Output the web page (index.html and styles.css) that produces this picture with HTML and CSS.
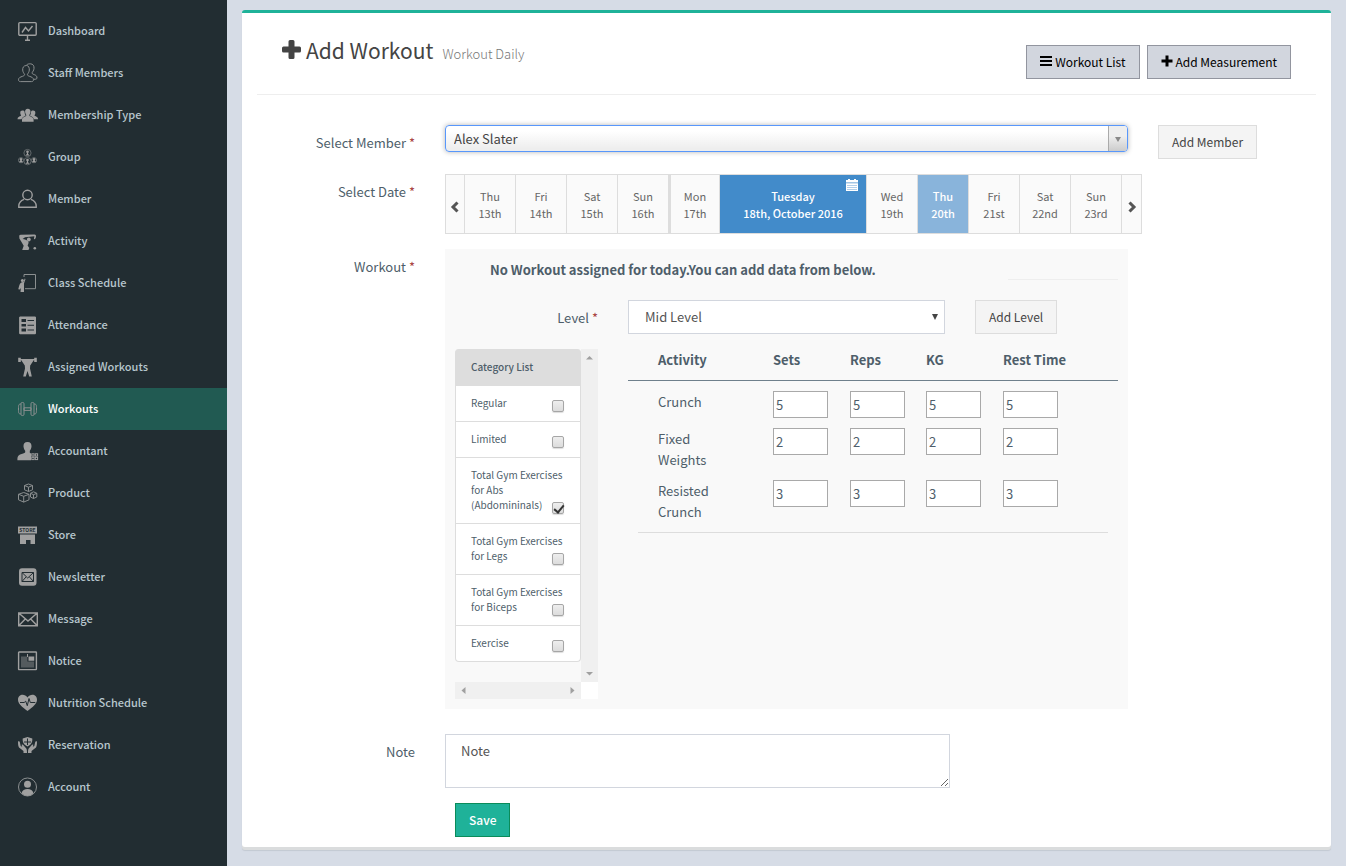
FILE: index.html
```html
<!DOCTYPE html>
<html lang="en">
<head>
<meta charset="utf-8">
<title>Add Workout</title>
<link rel="stylesheet" href="styles.css">
</head>
<body>
<div class="layout">
  <nav class="sidebar">
    <a class="nav-item" href="#"><svg class="nav-icon" viewBox="0 0 20 20"><rect x=".8" y="1.6" width="17.4" height="12.6" rx="1"/><path d="M4 11.5 7.5 6.500 10.500 10 14.500 5M9.500 14v4.500M7 19.300h5"/></svg>Dashboard</a>
    <a class="nav-item" href="#"><svg class="nav-icon thin" viewBox="0 0 20 20"><path d="M8.500 2.500c-3 0-4 2.200-3.800 4.600.2 2.200 1.300 3.300 1.800 4.100.5 1-.5 1.600-2.200 2.200C2.500 14 .5 14.600.5 16.800c0 1.200.8 1.800 2 1.800h11c1.200 0 2-.6 2-1.800 0-2.200-2-2.800-3.800-3.400-1.700-.6-2.700-1.200-2.200-2.200.5-.8 1.600-1.900 1.800-4.100.2-2.400-.8-4.600-2.800-4.600zM8.500 2C9.500 1 11 .8 12.200.8c3 0 4 2.200 3.800 4.600-.2 2.200-1.300 3.300-1.800 4.100-.5 1 .5 1.600 2.200 2.200 1.400.5 2.600 1.300 2.600 3.300 0 1-1.200 1.300-3 1.300"/></svg>Staff Members</a>
    <a class="nav-item" href="#"><svg class="nav-icon solid" viewBox="0 0 20 20"><path d="M9.800 3.800c2 0 2.900 1.400 2.700 3.300-.1 1.300-.7 2-1.100 2.700v1.200c1.400.8 4.200 1.400 4.200 3.600v2.200H4v-2.200c0-2.200 2.800-2.800 4.200-3.600V9.800c-.4-.7-1-1.400-1.100-2.700-.2-1.900.7-3.300 2.700-3.300zM4.500 5.500c1.100 0 1.900.5 2.100 1.400 0 1.400.5 2.500 1.100 3.600-1.500 1.200-3.700 1.600-4.200 3.700H-.5c0-2.200 2-2.700 3.500-3.400V10C2.300 9 2.200 8.200 2.300 7.400c0-1.200.8-1.900 2.200-1.900zM15.100 5.500c-1.100 0-1.900.5-2.100 1.400 0 1.400-.5 2.500-1.100 3.600 1.500 1.200 3.700 1.600 4.200 3.700h4c0-2.200-2-2.700-3.500-3.400V10c.7-1 .8-1.800.7-2.600 0-1.200-.8-1.900-2.200-1.900z"/></svg>Membership Type</a>
    <a class="nav-item" href="#"><svg class="nav-icon thin" viewBox="0 0 20 20"><g opacity=".6"><circle cx="9.500" cy="6" r="3.600"/><circle cx="3" cy="13.200" r="2.600"/><circle cx="9.500" cy="14.200" r="3.600"/><circle cx="16" cy="13.200" r="2.600"/></g><g class="fill"><circle cx="9.500" cy="4.800" r="1.300"/><path d="M8.900 6h1.200v1l1.500 1.400h-4.200L8.900 7z"/><circle cx="9.500" cy="13" r="1.300"/><path d="M8.900 14h1.200v1.300l1.500 1.400h-4.200l1.500-1.400z"/><circle cx="3" cy="12.300" r="1.200"/><path d="M2.500 13h1l1.500 2.200H1z"/><circle cx="16" cy="12.300" r="1.200"/><path d="M15.500 13h1l1.500 2.200h-4z"/></g></svg>Group</a>
    <a class="nav-item" href="#"><svg class="nav-icon" viewBox="0 0 20 20"><circle cx="9.500" cy="6" r="4.700"/><path d="M6 10.300C3 11.500.8 13.500.8 17v1.300h17.400V17c0-3.500-2.200-5.500-5.200-6.700"/></svg>Member</a>
    <a class="nav-item" href="#"><svg class="nav-icon solid" viewBox="0 0 20 20"><path d="M1.200 4.500 2.500 3.800l14-.2 1.300.5.200 1.800-1 2.300-1.100-.3.500-2.600L7 6.200 4.600 8c1.800.2 4.600.8 5.700 2.500.7 1.300-.2 2.800-.7 4l1.700 2.600-.8 1.900H4.200l1.500-4.300L3.500 11 1.400 7.500z"/><circle cx="10.800" cy="8.500" r="1.900"/><circle cx="16.800" cy="17.300" r="1.300"/></svg>Activity</a>
    <a class="nav-item" href="#"><svg class="nav-icon thin" viewBox="0 0 20 20"><path d="M6 4V1.500h11.500v14.200H7"/><g class="fill"><circle cx="4.400" cy="7.500" r="1.500"/><path d="M7.500 6 6 10.500V19H2.500l.3-4-1 1.500-1.500-.3C1 13.500 1.600 10 3.800 9.200l1.700-.1L6.700 5.600z"/></g></svg>Class Schedule</a>
    <a class="nav-item" href="#"><svg class="nav-icon solid" viewBox="0 0 20 20"><path fill-rule="evenodd" d="M2 1.500h15.200l.8.800v16.200l-.8.700H2l-.9-.7V2.300zM3.500 4v3H8V4zm0 5v2.500H8V9zm0 4.500v3H8v-3zM9.500 5v1H16V5zm0 4.700v1H16v-1zm0 4.700v1H16v-1z"/></svg>Attendance</a>
    <a class="nav-item" href="#"><svg class="nav-icon solid" viewBox="0 0 20 20"><path d="M.2.800h2.600V2h13.400V.8h2.600V5h-2.600V3.200h-.5l-3.500 5.300-.2 3 1.800 8h-2.600L9.500 14l-1.700 5.500H5.200l1.800-8-.2-3L3.300 3.200h-.5V5H.2z"/><circle cx="9.500" cy="5.700" r="1.900"/></svg>Assigned Workouts</a>
    <a class="nav-item active" href="#"><svg class="nav-icon thin" viewBox="0 0 20 20"><rect x="3" y="3.500" width="3" height="13" rx="1.200"/><rect x="13" y="3.500" width="3" height="13" rx="1.200"/><path d="M6 8.800h7v2.600H6zM3 5C.5 5 .5 6 .5 10s0 5 2.500 5M16 5c2.500 0 2.500 1 2.500 5s0 5-2.500 5"/></svg>Workouts</a>
    <a class="nav-item" href="#"><svg class="nav-icon solid" viewBox="0 0 20 20"><path d="M9.500 1c3 0 4.200 1.800 4 4.500-.1 2-1 3.300-1.700 4.200v2l1.200.8v6.700H-.6c0-4.200 1-5 3.500-5.900 2-.8 4.300-1.200 4.300-2V9.700C6.400 8.800 5.700 7.500 5.500 5.500 5.300 2.800 6.500 1 9.500 1z"/><g class="line"><rect x="13.800" y="12.800" width="2.300" height="2.300"/><rect x="17.300" y="12.800" width="2.300" height="2.300"/><rect x="13.800" y="16.300" width="2.300" height="2.300"/><rect x="17.300" y="16.300" width="2.300" height="2.300"/></g></svg>Accountant</a>
    <a class="nav-item" href="#"><svg class="nav-icon thin" viewBox="0 0 20 20"><path d="m10.500 1 4 1.500v4.300l-4 1.700-4-1.700V2.500zM6.500 2.500l4 1.700 4-1.700M10.500 4.200v4.300M5.700 9.500l5.300 1.800v5.500l-5.300 2.300-5.200-2.300v-5.500zM.5 11.300l5.200 2 5.300-2M5.700 13.300v5.800M15.500 8.800l3.300 1.500v3.700l-3.300 1.500-3-1.500v-3.700zM12.500 10.300l3 1.400 3.300-1.400M15.500 11.700v3.800"/></svg>Product</a>
    <a class="nav-item" href="#"><svg class="nav-icon solid" viewBox="0 0 20 20"><path d="M0 1.500h19v7H0zM2 9.500h15V19h-4.500v-4H8v4H2z"/><text class="store-sign" x="9.500" y="6.700">STORE</text></svg>Store</a>
    <a class="nav-item" href="#"><svg class="nav-icon solid" viewBox="0 0 20 20"><rect x="1" y="1.200" width="17.500" height="17.600" rx="3"/><path class="cut" d="M4 5.500h11.500v9H4zL9.700 11l5.800-5.500M4 14.500l4-4.500m3.500 0 4 4.500"/></svg>Newsletter</a>
    <a class="nav-item" href="#"><svg class="nav-icon" viewBox="0 0 20 20"><path d="M.7 4h18.600v12.800H.7zL10 12l9.300-8M.7 16.800 7.300 10M19.300 16.800 12.700 10"/></svg>Message</a>
    <a class="nav-item" href="#"><svg class="nav-icon" viewBox="0 0 20 20"><rect x=".6" y="1" width="17.800" height="17.600" rx=".5"/><g class="fill"><path d="M10.500 5.500h5.700v4.300h-5.700zM9 3h1v3H9z"/><path opacity=".4" d="M3 5.500h6.300v5H16v6H3z"/></g></svg>Notice</a>
    <a class="nav-item" href="#"><svg class="nav-icon solid" viewBox="0 0 20 20"><path d="M9.500 18C4 13.800 0 10.500 0 6.700 0 1.300 6.500.2 9.500 4.500c3-4.300 9.500-3.200 9.500 2.200 0 3.800-4 7.100-9.500 11.300z"/><path class="cut" d="M2 9.500h4.200l1.500-1.300 1.600 4.500L11 5.500l1.300 4h5"/></svg>Nutrition Schedule</a>
    <a class="nav-item" href="#"><svg class="nav-icon solid" viewBox="0 0 20 20"><path d="m9.500 2 4.800 1.500c.2 4-1 6.200-4.800 8C5.700 9.700 4.500 7.500 4.700 3.500zM0 6.500c1-.5 1.700 0 1.900 1L2.700 11l1.500.8-.6-2 1.200-.2 3.500 3.900c.6 1 .7 2.300.7 4.500H5.500v-2L1 12.500C.2 11 0 9 0 6.500zM19 6.500c-1-.5-1.700 0-1.900 1L16.300 11l-1.500.8.6-2-1.200-.2-3.500 3.900c-.6 1-.7 2.300-.7 4.500h3.500v-2l4.500-3.500c.8-1.500 1-3.500 1-6z"/><path class="cut" d="M9.500 3.500v3.500h3.500M9.500 10V7h-3.500"/></svg>Reservation</a>
    <a class="nav-item" href="#"><svg class="nav-icon thin" viewBox="0 0 20 20"><circle cx="9.500" cy="10" r="9"/><g class="fill"><circle cx="9.500" cy="7.300" r="3.500"/><path d="M3.500 16.300c.8-3 3-4.300 6-4.300s5.200 1.300 6 4.300A9 9 0 0 1 9.500 19a9 9 0 0 1-6-2.700z"/></g></svg>Account</a>
  </nav>

  <main class="content">
    <section class="card">
      <header class="card-header">
        <h1 class="title"><svg class="plus-lg" viewBox="0 0 19 19"><path d="M6.500 1.500A1.500 1.500 0 0 1 8 0h3a1.500 1.500 0 0 1 1.500 1.500v5h5A1.500 1.500 0 0 1 19 8v3a1.500 1.500 0 0 1-1.500 1.500h-5v5A1.500 1.500 0 0 1 11 19H8a1.500 1.500 0 0 1-1.500-1.500v-5h-5A1.500 1.500 0 0 1 0 11V8a1.500 1.500 0 0 1 1.500-1.500h5z"/></svg>Add Workout<small class="subtitle">Workout Daily</small></h1>
        <div class="actions">
          <button class="btn btn-grey" type="button"><svg class="btn-icon" viewBox="0 0 12 12"><path d="M0 1h12v2H0zM0 5h12v2H0zM0 9h12v2H0z"/></svg>Workout List</button>
          <button class="btn btn-grey" type="button"><svg class="btn-icon" viewBox="0 0 12 12"><path d="M4.500.5h3v4h4v3h-4v4h-3v-4h-4v-3h4z"/></svg>Add Measurement</button>
        </div>
      </header>

      <form class="form">
        <div class="form-row">
          <label class="field-label" for="member">Select Member <span class="required">*</span></label>
          <div class="chosen"><select id="member" class="chosen-select"><option>Alex Slater</option></select></div>
          <div><button class="btn btn-light" type="button">Add Member</button></div>
        </div>

        <div class="form-row">
          <span class="field-label">Select Date <span class="required">*</span></span>
          <div class="dates">
            <button class="date-nav" type="button" aria-label="Previous"><svg class="chevron" viewBox="0 0 10 12"><path d="M7.500 1.500 3 6l4.500 4.500"/></svg></button>
            <button class="date" type="button">Thu<br>13th</button>
            <button class="date" type="button">Fri<br>14th</button>
            <button class="date" type="button">Sat<br>15th</button>
            <button class="date" type="button">Sun<br>16th</button>
            <button class="date week-start" type="button">Mon<br>17th</button>
            <button class="date selected" type="button">Tuesday<br>18th, October 2016<svg class="calendar" viewBox="0 0 12 12"><path d="M0 1h2V0h2v1h4V0h2v1h2v2.500H0zM0 4.300h12V12H0z"/><path class="calendar-lines" d="M1 6.500h10M1 8.500h10M1 10.500h10"/></svg></button>
            <button class="date" type="button">Wed<br>19th</button>
            <button class="date today" type="button">Thu<br>20th</button>
            <button class="date" type="button">Fri<br>21st</button>
            <button class="date" type="button">Sat<br>22nd</button>
            <button class="date" type="button">Sun<br>23rd</button>
            <button class="date-nav" type="button" aria-label="Next"><svg class="chevron" viewBox="0 0 10 12"><path d="M2.500 1.500 7 6l-4.500 4.500"/></svg></button>
          </div>
        </div>

        <div class="form-row">
          <span class="field-label">Workout <span class="required">*</span></span>
          <div class="panel">
            <div class="panel-head">
              <strong class="panel-title">No Workout assigned for today.You can add data from below.</strong>
              <hr class="panel-rule">
            </div>
            <div class="panel-grid">
              <label class="level-label" for="level">Level <span class="required">*</span></label>
              <div class="level"><select id="level" class="level-select"><option>Mid Level</option></select></div>
              <div><button class="btn btn-light" type="button">Add Level</button></div>

              <div class="scroller">
                <div class="categories">
                  <div class="category category-head">Category List</div>
                  <label class="category"><span class="category-name">Regular</span><input class="check" type="checkbox"></label>
                  <label class="category"><span class="category-name">Limited</span><input class="check" type="checkbox"></label>
                  <label class="category"><span class="category-name">Total Gym Exercises for Abs (Abdomininals)</span><input class="check" type="checkbox" checked></label>
                  <label class="category"><span class="category-name">Total Gym Exercises for Legs</span><input class="check" type="checkbox"></label>
                  <label class="category"><span class="category-name">Total Gym Exercises for Biceps</span><input class="check" type="checkbox"></label>
                  <label class="category"><span class="category-name">Exercise</span><input class="check" type="checkbox"></label>
                </div>
                <div class="bar bar-y"><svg class="bar-arrow" viewBox="0 0 7 7"><path d="M0 5.500h7L3.500 2z"/></svg><svg class="bar-arrow" viewBox="0 0 7 7"><path d="M0 2h7L3.500 5.500z"/></svg></div>
                <div class="bar bar-x"><svg class="bar-arrow" viewBox="0 0 7 7"><path d="M5.500 0v7L1.500 3.500z"/></svg><svg class="bar-arrow" viewBox="0 0 7 7"><path d="M1.500 0v7l4-3.500z"/></svg></div>
                <div class="bar-corner"></div>
              </div>

              <div class="activities">
                <table class="table">
                  <thead>
                    <tr><th class="col-name">Activity</th><th class="col-sets">Sets</th><th class="col-reps">Reps</th><th class="col-kg">KG</th><th class="col-rest">Rest Time</th></tr>
                  </thead>
                  <tbody>
                    <tr><td>Crunch</td><td><input class="num" aria-label="Crunch sets" value="5"></td><td><input class="num" aria-label="Crunch reps" value="5"></td><td><input class="num" aria-label="Crunch KG" value="5"></td><td><input class="num" aria-label="Crunch rest time" value="5"></td></tr>
                    <tr><td>Fixed Weights</td><td><input class="num" aria-label="Fixed Weights sets" value="2"></td><td><input class="num" aria-label="Fixed Weights reps" value="2"></td><td><input class="num" aria-label="Fixed Weights KG" value="2"></td><td><input class="num" aria-label="Fixed Weights rest time" value="2"></td></tr>
                    <tr><td>Resisted Crunch</td><td><input class="num" aria-label="Resisted Crunch sets" value="3"></td><td><input class="num" aria-label="Resisted Crunch reps" value="3"></td><td><input class="num" aria-label="Resisted Crunch KG" value="3"></td><td><input class="num" aria-label="Resisted Crunch rest time" value="3"></td></tr>
                  </tbody>
                </table>
                <hr class="table-rule">
              </div>
            </div>
          </div>
        </div>

        <div class="form-row note-row">
          <label class="field-label" for="note">Note</label>
          <textarea id="note" class="note" placeholder="Note"></textarea>
        </div>

        <div class="form-row">
          <div class="save-cell"><button class="btn btn-save" type="submit">Save</button></div>
        </div>
      </form>
    </section>
  </main>
</div>
</body>
</html>
```
FILE: styles.css
```css
* { box-sizing: border-box; }

body {
  margin: 0;
  background: #d6dce6;
  color: #4e5e6a;
  font: 13px/21px "Noto Sans CJK SC", "Open Sans", sans-serif;
}

button, input, select, textarea { font: inherit; color: inherit; margin: 0; }
hr { margin: 0; border: 0; }

.layout { display: grid; grid-template-columns: 227px 1fr; min-height: 100vh; }

/* Sidebar */
.sidebar { background: #222d32; padding-top: 10px; }
.nav-item {
  display: flex;
  align-items: center;
  gap: 10px;
  height: 42px;
  padding: 0 0 2px 18px;
  color: #b8c7ce;
  font-size: 11px;
  font-weight: 500;
  text-decoration: none;
}
.nav-item.active { background: #215a52; color: #fff; }
.nav-icon {
  width: 20px;
  height: 20px;
  margin-top: 2px;
  overflow: visible;
  fill: none;
  stroke: #a0a0a0;
  stroke-width: 1.4;
}
.nav-icon.thin { stroke-width: 1; stroke: #8b8f90; }
.nav-icon.solid, .nav-icon .fill { fill: #a0a0a0; stroke: none; }
.nav-icon .line { fill: none; stroke: #a0a0a0; stroke-width: 1; }
.nav-icon .cut { fill: none; stroke: #222d32; stroke-width: 1; }
.store-sign { fill: #222d32; font-size: 5px; font-weight: 700; text-anchor: middle; }

/* Card */
.content { padding: 10px 15px 16px; }
.card {
  background: #fff;
  border-top: 3px solid #1fb299;
  border-radius: 3px;
  box-shadow: 0 3px 0 #dadcdd, 0 4px 1px #c3c9d2;
}
.card-header {
  display: flex;
  justify-content: space-between;
  align-items: flex-start;
  margin: 0 15px;
  padding: 32px 25px 15px;
  border-bottom: 1px solid #eee;
}
.title {
  display: flex;
  align-items: baseline;
  margin: -10px 0 0;
  color: #444;
  font-size: 21px;
  font-weight: 400;
  line-height: 30px;
}
.plus-lg { width: 19px; height: 19px; margin-right: 5px; fill: #444; }
.subtitle { margin-left: 9px; color: #777; font-size: 13px; font-weight: 300; }
.actions { display: flex; gap: 7px; }

.btn {
  display: inline-flex;
  align-items: center;
  gap: 3px;
  height: 34px;
  padding: 0 13px 2px;
  border: 1px solid;
  font-size: 12px;
}
.btn-grey { background: #d2d6de; border-color: #92959f; color: #000; }
.btn-light { background: #f4f4f4; border-color: #ddd; color: #444; }
.btn-save { background: #1fb299; border-color: #0a8c5a; color: #fff; font-weight: 500; }
.btn-icon { width: 12px; height: 12px; }

/* Form */
.form {
  display: grid;
  gap: 15px;
  padding: 30px 25px 10px;
}
.form-row {
  display: grid;
  grid-template-columns: minmax(0, 148fr) minmax(0, 683fr) minmax(0, 148fr);
  column-gap: 30px;
}
.form-row > * { min-width: 0; }
.field-label { padding-top: 7px; text-align: right; }
.required { color: #a94442; }

.chosen { position: relative; height: 27px; }
.chosen-select {
  appearance: none;
  width: 100%;
  height: 27px;
  padding: 0 8px;
  border: 1px solid #5897fb;
  border-radius: 4px;
  background: linear-gradient(#fff 20%, #eee 90%);
  box-shadow: 0 0 5px rgba(0, 0, 0, .3);
  color: #444;
}
.chosen::before {
  content: "";
  position: absolute;
  top: 1px;
  right: 1px;
  width: 18px;
  height: 25px;
  border-left: 1px solid #aaa;
  border-radius: 0 3px 3px 0;
  background: linear-gradient(#eee 40%, #ccc);
  pointer-events: none;
}
.chosen::after, .level::after {
  content: "";
  position: absolute;
  top: 12px;
  right: 7px;
  border: solid transparent;
  border-width: 5px 3px 0;
  border-top-color: #888;
  pointer-events: none;
}

/* Date strip */
.dates { display: flex; width: max-content; border: solid #ddd; border-width: 1px 0 1px 1px; }
.date, .date-nav {
  position: relative;
  width: 51px;
  height: 58px;
  padding: 2px 0 0;
  border: 0;
  border-right: 1px solid #ddd;
  background: #fafafa;
  color: #666;
  font-size: 11px;
  line-height: 17px;
}
.date-nav { width: 20px; }
.date-nav:first-child { width: 19px; }
.chevron { width: 10px; height: 12px; fill: none; stroke: #555; stroke-width: 3; vertical-align: middle; }
.date.week-start { border-left: 2px solid #ddd; }
.date.selected { width: 147px; background: #428bca; color: #fff; font-weight: 500; }
.date.today { background: #89b4db; color: #fff; font-weight: 500; }
.calendar { position: absolute; top: 4px; right: 8px; width: 12px; height: 12px; fill: #fff; }
.calendar-lines { stroke: #b4d0ea; stroke-width: 1; }

/* Workout panel */
.panel { background: #f9f9f9; padding: 10px; }
.panel-head { display: flex; align-items: flex-end; gap: 10px; margin-bottom: 20px; }
.panel-title { flex: 5; padding-left: 35px; }
.panel-rule { flex: 0 0 110px; border-top: 1px solid #eee; }
.panel-grid {
  display: grid;
  grid-template-columns: 143fr 317fr 143fr;
  column-gap: 30px;
  row-gap: 15px;
}
.level-label { padding-top: 7px; text-align: right; }
.level { position: relative; }
.level-select {
  appearance: none;
  width: 100%;
  height: 34px;
  padding: 0 16px 2px;
  border: 1px solid #d2d6de;
  border-radius: 0;
  background: #fff;
  color: #555;
}
.level::after { top: 14px; border-width: 6px 3px 0; border-top-color: #444; }

.scroller { display: grid; grid-template-columns: 1fr 17px; grid-template-rows: 1fr 17px; }
.categories { padding-bottom: 20px; font-size: 10px; line-height: 15px; }
.category {
  display: grid;
  padding: 9px 15px 11px;
  border: 1px solid #ddd;
  border-top: 0;
  background: #fff;
}
.category:last-child { border-radius: 0 0 4px 4px; }
.category-head { padding-top: 10px; border-radius: 4px 4px 0 0; background: #ddd; font-weight: 500; }
.category-name, .check { grid-area: 1 / 1; }
.check {
  appearance: none;
  align-self: end;
  justify-self: end;
  width: 12px;
  height: 12px;
  margin: 0 1px -2px 0;
  border: 1px solid #a6a6a6;
  border-radius: 2px;
  background: linear-gradient(#eee, #dcdcdc);
  box-shadow: 0 1px 1px #ddd;
}
.check:checked::before {
  content: "";
  display: block;
  width: 4px;
  height: 8px;
  margin: 0 0 0 3px;
  border: solid #333;
  border-width: 0 2px 2px 0;
  transform: rotate(40deg);
}
.bar { display: flex; justify-content: space-between; align-items: center; padding: 5px; background: #f0f0f0; }
.bar-y { flex-direction: column; }
.bar-arrow { width: 7px; height: 7px; fill: #a0a0a0; }
.bar-corner { background: #fff; }

.activities { grid-column: span 2; }
.table { width: 100%; table-layout: fixed; border-collapse: collapse; }
.table th { padding: 0 0 10px; border-bottom: 1px solid #6f808c; font-weight: 700; text-align: left; white-space: nowrap; }
.table td { padding: 10px 0 0; vertical-align: top; }
.table th:first-child, .table td:first-child { padding-left: 30px; padding-right: 40px; }
.col-name { width: 145px; }
.col-sets { width: 77px; }
.col-reps { width: 76px; }
.col-kg { width: 77px; }
.col-rest { width: 115px; }
.num { display: block; width: 55px; height: 27px; padding: 1px 2px; border: 1px solid #a9a9a9; background: #fff; }
.table-rule { margin: 10px 10px 0; border-top: 1px solid #ddd; }

/* Note and save */
.note-row { grid-template-columns: minmax(0, 148fr) minmax(0, 505fr) minmax(0, 326fr); margin-top: 10px; }
.note { display: block; height: 54px; padding: 5px 15px; border: 1px solid #d2d6de; background: #fff; color: #555; }
.note::placeholder { color: #555; }
.save-cell { grid-column: 2; padding-left: 10px; }
```
